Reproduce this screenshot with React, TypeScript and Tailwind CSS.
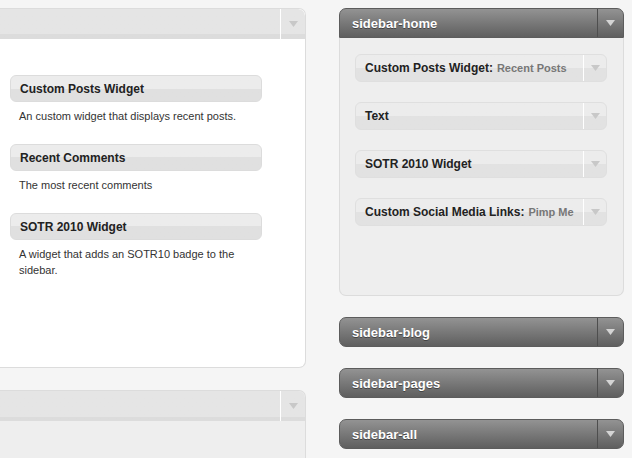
import React from 'react';

const Arrow: React.FC<{ dark?: boolean }> = ({ dark }) => (
  <svg width="9" height="6" viewBox="0 0 9 6" aria-hidden="true">
    <path d="M0 0 H9 L4.5 6 Z" fill={dark ? '#d4d4d4' : '#c8c8c8'} />
  </svg>
);

const AvailableWidget: React.FC<{ title: string; desc: React.ReactNode }> = ({ title, desc }) => (
  <div className="mb-[20px]">
    <div className="h-[27px] w-[252px] rounded-[6px] border border-[#dcdcdc] bg-gradient-to-b from-[#ececec] from-50% to-[#e0e0e0] to-50% px-[9px] flex items-center">
      <span className="text-[12px] font-bold text-[#222]">{title}</span>
    </div>
    <p className="mt-[6px] pl-[9px] pr-[60px] text-[11px] leading-[16px] text-[#333]">{desc}</p>
  </div>
);

const SidebarWidget: React.FC<{ title: string; sub?: string }> = ({ title, sub }) => (
  <div className="h-[28px] rounded-[6px] border border-[#dfdfdf] bg-gradient-to-b from-[#ececec] from-50% to-[#e2e2e2] to-50% flex items-stretch">
    <div className="flex-1 flex items-center pl-[9px] whitespace-nowrap overflow-hidden">
      <span className="text-[12px] font-bold text-[#222]">{title}{sub && ':'}</span>
      {sub && <span className="ml-[4px] text-[11px] font-bold text-[#777]">{sub}</span>}
    </div>
    <div className="w-[23px] border-l border-white flex items-center justify-center">
      <Arrow />
    </div>
  </div>
);

const DarkHeader: React.FC<{ title: string; open?: boolean }> = ({ title, open }) => (
  <div
    className={`h-[30px] shrink-0 border border-[#5c5c5c] bg-gradient-to-b from-[#939393] to-[#5f5f5f] flex items-stretch ${
      open ? 'rounded-t-[7px]' : 'rounded-[7px]'
    }`}
  >
    <div className="flex-1 flex items-center pl-[12px] pt-[1px]">
      <span className="text-[13px] font-bold text-white [text-shadow:0_1px_0_#444]">{title}</span>
    </div>
    <div className="w-[26px] border-l border-[#4e4e4e] flex items-center justify-center">
      <Arrow dark />
    </div>
  </div>
);

const LightHeader: React.FC = () => (
  <div className="h-[30px] rounded-tr-[7px] bg-gradient-to-b from-[#e5e5e5] from-85% to-[#dcdcdc] to-85% flex items-stretch">
    <div className="flex-1" />
    <div className="w-[25px] border-l border-white flex items-center justify-center">
      <Arrow />
    </div>
  </div>
);

export default function App() {
  return (
    <div
      className="w-[632px] h-[458px] overflow-hidden bg-[#f5f5f5] flex gap-[33px] pt-[8px]"
      style={{ fontFamily: '"Liberation Sans", Arial, sans-serif' }}
    >
      {/* Available widgets */}
      <div className="w-[306px] shrink-0 flex flex-col gap-[22px]">
        <div className="h-[360px] shrink-0 rounded-r-[7px] border border-l-0 border-[#dcdcdc] bg-white overflow-hidden">
          <LightHeader />
          <div className="pl-[10px] pt-[36px]">
            <AvailableWidget title="Custom Posts Widget" desc="An custom widget that displays recent posts." />
            <AvailableWidget title="Recent Comments" desc="The most recent comments" />
            <AvailableWidget title="SOTR 2010 Widget" desc="A widget that adds an SOTR10 badge to the sidebar." />
          </div>
        </div>
        <div className="h-[80px] shrink-0 rounded-r-[7px] border border-l-0 border-[#dcdcdc] bg-[#eeeeee] overflow-hidden">
          <LightHeader />
        </div>
      </div>

      {/* Sidebars */}
      <div className="w-[285px] shrink-0 flex flex-col gap-[21px]">
        <div className="shrink-0">
          <DarkHeader title="sidebar-home" open />
          <div className="h-[258px] rounded-b-[7px] border border-t-0 border-[#dcdcdc] bg-[#eeeeee] pt-[16px] pl-[15px] pr-[16px] flex flex-col gap-[20px]">
            <SidebarWidget title="Custom Posts Widget" sub="Recent Posts" />
            <SidebarWidget title="Text" />
            <SidebarWidget title="SOTR 2010 Widget" />
            <SidebarWidget title="Custom Social Media Links" sub="Pimp Me" />
          </div>
        </div>
        <DarkHeader title="sidebar-blog" />
        <DarkHeader title="sidebar-pages" />
        <DarkHeader title="sidebar-all" />
      </div>
    </div>
  );
}
